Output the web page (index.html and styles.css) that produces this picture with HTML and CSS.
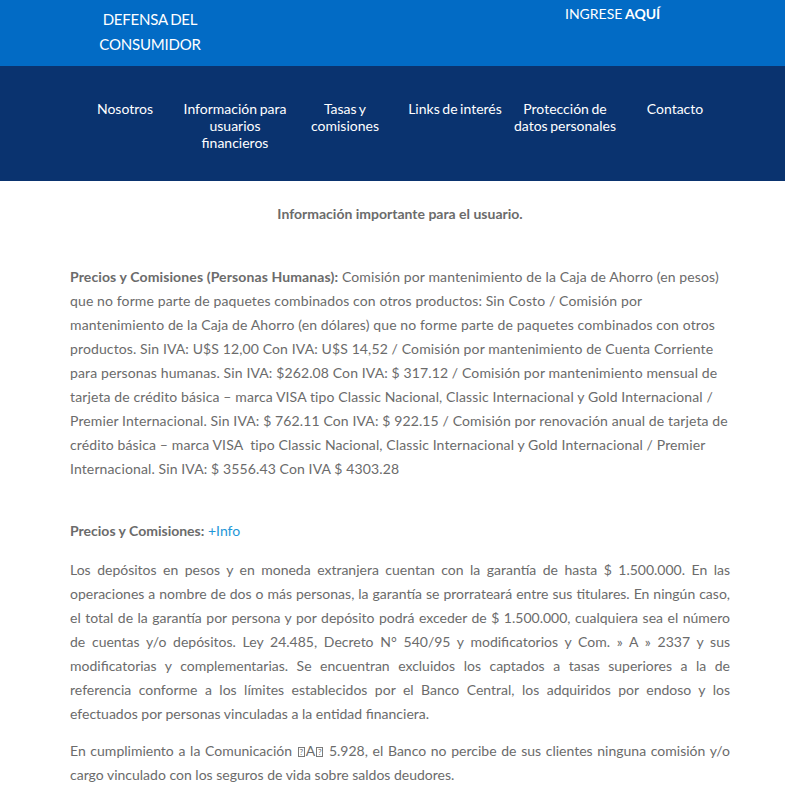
FILE: index.html
```html
<!DOCTYPE html>
<html lang="es">
<head>
<meta charset="utf-8">
<title>Información importante para el usuario</title>
<link rel="stylesheet" href="styles.css">
</head>
<body>
<header class="topbar">
  <div class="wrap topbar-inner">
    <div class="brand">DEFENSA DEL<br>CONSUMIDOR</div>
    <div class="login">INGRESE <strong>AQUÍ</strong></div>
  </div>
</header>
<nav class="mainnav">
  <ul class="wrap navlist">
    <li>Nosotros</li>
    <li>Información para usuarios financieros</li>
    <li>Tasas y comisiones</li>
    <li>Links de interés</li>
    <li>Protección de datos personales</li>
    <li>Contacto</li>
  </ul>
</nav>
<main class="wrap content">
  <h1 class="title">Información importante para el usuario.</h1>
  <p class="left first"><strong>Precios y Comisiones (Personas Humanas):</strong> Comisión por mantenimiento de la Caja de Ahorro (en pesos) que no forme parte de paquetes combinados con otros productos: Sin Costo / Comisión por mantenimiento de la Caja de Ahorro (en dólares) que no forme parte de paquetes combinados con otros productos. Sin IVA: U$S 12,00 Con IVA: U$S 14,52 / Comisión por mantenimiento de Cuenta Corriente para personas humanas. Sin IVA: $262.08 Con IVA: $ 317.12 / Comisión por mantenimiento mensual de tarjeta de crédito básica – marca VISA tipo Classic Nacional, Classic Internacional y Gold Internacional / Premier Internacional. Sin IVA: $ 762.11 Con IVA: $ 922.15 / Comisión por renovación anual de tarjeta de crédito básica – marca VISA &nbsp;tipo Classic Nacional, Classic Internacional y Gold Internacional / Premier Internacional. Sin IVA: $ 3556.43 Con IVA $ 4303.28</p>
  <p class="left spaced"><strong>Precios y Comisiones:</strong> <a href="#">+Info</a></p>
  <p class="just">Los depósitos en pesos y en moneda extranjera cuentan con la garantía de hasta $ 1.500.000. En las operaciones a nombre de dos o más personas, la garantía se prorrateará entre sus titulares. En ningún caso, el total de la garantía por persona y por depósito podrá exceder de $ 1.500.000, cualquiera sea el número de cuentas y/o depósitos. Ley 24.485, Decreto N° 540/95 y modificatorios y Com. » A » 2337 y sus modificatorias y complementarias. Se encuentran excluidos los captados a tasas superiores a la de referencia conforme a los límites establecidos por el Banco Central, los adquiridos por endoso y los efectuados por personas vinculadas a la entidad financiera.</p>
  <p class="just">En cumplimiento a la Comunicación <span class="tofu">?</span>A<span class="tofu">?</span> 5.928, el Banco no percibe de sus clientes ninguna comisión y/o cargo vinculado con los seguros de vida sobre saldos deudores.</p>
</main>
</body>
</html>
```

FILE: styles.css
```css
* { box-sizing: border-box; }
html, body { margin: 0; padding: 0; background: #fff; }
body {
  font-family: Lato, "Open Sans", Arial, sans-serif;
  color: #6b6b6b;
}
.wrap {
  width: 660px;
  margin-left: 70px;
}
.topbar {
  background: #026bc5;
  height: 66px;
  color: #fff;
}
.topbar-inner {
  display: flex;
  justify-content: space-between;
}
.brand {
  width: 160px;
  text-align: center;
  font-size: 15px;
  line-height: 25px;
  padding-top: 7px;
  word-spacing: -1px;
  letter-spacing: -0.2px;
}
.login {
  width: 165px;
  font-size: 14px;
  line-height: 18px;
  padding-top: 5px;
  word-spacing: -1px;
}
.login strong { font-weight: 700; }
.mainnav {
  background: #0a336f;
  height: 115px;
  padding-top: 34px;
}
.navlist {
  list-style: none;
  padding: 0;
  margin-top: 0;
  margin-bottom: 0;
  display: grid;
  grid-template-columns: repeat(6, 110px);
}
.navlist li {
  color: #fff;
  font-size: 14px;
  line-height: 17px;
  text-align: center;
  word-spacing: -1px;
}
.content {
  padding-top: 24px;
}
.title {
  margin: 0 0 43px;
  font-size: 14px;
  line-height: 17px;
  font-weight: 700;
  text-align: center;
  color: #6b6b6b;
}
.content p {
  margin: 0 0 13px;
  font-size: 14px;
  line-height: 24px;
}
.content p strong { font-weight: 700; }
.left { text-align: left; }
.just { text-align: justify; }
.first { letter-spacing: 0.12px; }
.spaced { margin-top: 38px !important; margin-bottom: 15px !important; }
a { color: #1e97d8; text-decoration: none; }
.tofu {
  display: inline-block;
  width: 7px;
  height: 10px;
  border: 1px solid #7a7a7a;
  font-size: 8px;
  line-height: 8px;
  text-align: center;
  vertical-align: -1px;
  color: #6b6b6b;
  margin: 0 1px;
  overflow: hidden;
}
```
